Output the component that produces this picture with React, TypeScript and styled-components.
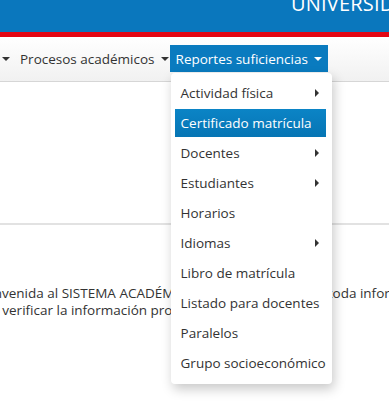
import React from "react";
import styled, { createGlobalStyle } from "styled-components";

const GlobalStyle = createGlobalStyle`
  html, body {
    margin: 0;
    padding: 0;
    background: #fff;
    overflow: hidden;
  }
  body {
    font-family: "Open Sans", "Liberation Sans", sans-serif;
    color: #333;
  }
`;

const Page = styled.div`
  width: 389px;
  height: 407px;
  overflow: hidden;
  position: relative;
`;

const Header = styled.header`
  height: 32px;
  background-color: #0a77bd;
  overflow: hidden;
  padding-left: 291px;
`;

const Title = styled.h1`
  margin: -9px 0 0;
  font-size: 20px;
  font-weight: 400;
  line-height: 26px;
  color: #fff;
  white-space: nowrap;
  letter-spacing: 0.01em;
`;

const Stripe = styled.div`
  height: 5px;
  background-color: #e30613;
`;

const NavBar = styled.nav`
  height: 45px;
  box-sizing: border-box;
  padding-top: 8px;
  background-image: linear-gradient(to bottom, #ffffff, #f1f1f1);
  border-bottom: 1px solid #d6d6d6;
  display: flex;
  align-items: flex-start;
`;

const NavList = styled.ul`
  list-style: none;
  margin: 0;
  padding: 0 0 0 2px;
  display: flex;
  align-items: center;
  gap: 10px;
`;

const NavItem = styled.li<{ $active?: boolean }>`
  position: relative;
  display: flex;
  align-items: center;
  gap: 6px;
  height: 27px;
  margin-left: ${(p) => (p.$active ? "-9px" : "0")};
  padding: ${(p) => (p.$active ? "0 6px" : "0")};
  background-color: ${(p) => (p.$active ? "#0a7bbf" : "transparent")};
  color: ${(p) => (p.$active ? "#fff" : "#333")};
  font-size: 13.5px;
  white-space: nowrap;
`;

const CaretDown = styled.span<{ $light?: boolean }>`
  display: inline-block;
  width: 0;
  height: 0;
  border-left: 4px solid transparent;
  border-right: 4px solid transparent;
  border-top: 4px solid ${(p) => (p.$light ? "#fff" : "#333")};
  margin-top: 1px;
`;

const Dropdown = styled.ul`
  position: absolute;
  top: 28px;
  left: 1px;
  width: 161px;
  margin: 0;
  padding: 6px 6px 5px 4px;
  box-sizing: border-box;
  list-style: none;
  background: #fff;
  border-radius: 4px;
  box-shadow: 2px 5px 12px rgba(0, 0, 0, 0.22);
  z-index: 10;
`;

const MenuItem = styled.li<{ $active?: boolean }>`
  display: flex;
  align-items: center;
  justify-content: space-between;
  height: 28px;
  margin-bottom: 2px;
  padding: 0 7px 0 6px;
  font-size: 13.5px;
  color: ${(p) => (p.$active ? "#fff" : "#333")};
  background-image: ${(p) =>
    p.$active ? "linear-gradient(to bottom, #0b84c6, #0675b4)" : "none"};
`;

const CaretRight = styled.span`
  width: 0;
  height: 0;
  border-top: 4px solid transparent;
  border-bottom: 4px solid transparent;
  border-left: 4px solid #333;
`;

const Content = styled.main`
  padding-top: 141px;
`;

const Rule = styled.hr`
  margin: 0;
  border: 0;
  border-top: 2px solid #e2e2e2;
`;

const Welcome = styled.p`
  margin: 60px 0 0 -30px;
  text-indent: 4px;
  width: 640px;
  font-size: 13.5px;
  line-height: 17px;
  color: #333;
`;

const items: { label: string; sub?: boolean; active?: boolean }[] = [
  { label: "Actividad física", sub: true },
  { label: "Certificado matrícula", active: true },
  { label: "Docentes", sub: true },
  { label: "Estudiantes", sub: true },
  { label: "Horarios" },
  { label: "Idiomas", sub: true },
  { label: "Libro de matrícula" },
  { label: "Listado para docentes" },
  { label: "Paralelos" },
  { label: "Grupo socioeconómico" },
];

const App: React.FC = () => {
  return (
    <Page>
      <GlobalStyle />
      <Header>
        <Title>UNIVERSIDAD NACIONAL</Title>
      </Header>
      <Stripe />
      <NavBar>
        <NavList>
          <NavItem>
            <CaretDown />
          </NavItem>
          <NavItem>
            Procesos académicos
            <CaretDown />
          </NavItem>
          <NavItem $active>
            Reportes suficiencias
            <CaretDown $light />
            <Dropdown>
              {items.map((item) => (
                <MenuItem key={item.label} $active={item.active}>
                  {item.label}
                  {item.sub && <CaretRight />}
                </MenuItem>
              ))}
            </Dropdown>
          </NavItem>
        </NavList>
      </NavBar>
      <Content>
        <Rule />
        <Welcome>
          Bienvenida al SISTEMA ACADÉMICO, aquí usted revisará toda información
          académica,
          <br />
          para verificar la información proporcionada.
        </Welcome>
      </Content>
    </Page>
  );
};

export default App;
